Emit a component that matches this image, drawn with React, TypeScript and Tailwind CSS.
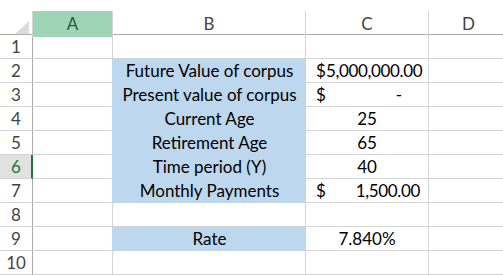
type Row = {
  n: number;
  label?: string;
  value?: React.ReactNode;
};

function Accounting({ num }: { num: string }) {
  return (
    <div className="flex h-full w-full items-end justify-between pl-[10px] pr-[8px] pb-[3px] leading-none">
      <span>$</span>
      <span className={num === '-' ? 'mr-[18px]' : 'tracking-[-0.35px]'}>{num}</span>
    </div>
  );
}

function Centered({ text }: { text: string }) {
  return <div className="flex h-full w-full items-end justify-center pb-[3px] leading-none">{text}</div>;
}

const rows: Row[] = [
  { n: 1 },
  { n: 2, label: 'Future Value of corpus', value: <Accounting num="5,000,000.00" /> },
  { n: 3, label: 'Present value of corpus', value: <Accounting num="-" /> },
  { n: 4, label: 'Current Age', value: <Centered text="25" /> },
  { n: 5, label: 'Retirement Age', value: <Centered text="65" /> },
  { n: 6, label: 'Time period (Y)', value: <Centered text="40" /> },
  { n: 7, label: 'Monthly Payments', value: <Accounting num="1,500.00" /> },
  { n: 8 },
  { n: 9, label: 'Rate', value: <Centered text="7.840%" /> },
  { n: 10 },
];

const cols = 'grid grid-cols-[33px_80px_193px_123px_80px]';

export default function App() {
  return (
    <div
      className="h-[275px] w-[503px] overflow-hidden bg-white pt-[11px] text-[17px] text-black"
      style={{ fontFamily: 'Lato, "Open Sans", sans-serif' }}
    >
      {/* column headers */}
      <div className={`${cols} h-[24px] border-b border-[#ababab] text-[#444]`}>
        <div className="relative border-r border-[#d4d4d4]">
          <div className="absolute right-[3px] bottom-[3px] h-0 w-0 border-b-[13px] border-l-[14px] border-b-[#dcdcdc] border-l-transparent" />
        </div>
        <div className="flex items-center justify-center border-r border-[#d4d4d4] bg-[#9fd5b7] text-[#1f5c3b]">A</div>
        <div className="flex items-center justify-center border-r border-[#d4d4d4]">B</div>
        <div className="flex items-center justify-center border-r border-[#d4d4d4]">C</div>
        <div className="flex items-center justify-center border-r border-[#d4d4d4]">D</div>
      </div>

      {rows.map((r) => {
        const filled = !!r.label;
        const selected = r.n === 6;
        return (
          <div key={r.n} className={`${cols} h-[24px]`}>
            <div
              className={
                selected
                  ? 'flex items-end justify-center border-r-2 border-b border-r-[#217346] border-b-[#d4d4d4] bg-[#e1e1e1] pb-[3px] pl-[1px] leading-none text-[#217346]'
                  : 'flex items-end justify-center border-r border-b border-r-[#ababab] border-b-[#d4d4d4] pb-[3px] leading-none text-[#444]'
              }
            >
              {r.n}
            </div>
            <div className={`border-b border-r border-b-[#d4d4d4] ${filled ? 'border-r-[#bdd7ee]' : 'border-r-[#d4d4d4]'}`} />
            <div className={filled ? 'border-b border-[#bdd7ee] bg-[#bdd7ee]' : 'border-r border-b border-[#d4d4d4]'}>
              {r.label && <Centered text={r.label} />}
            </div>
            <div className="border-r border-b border-[#d4d4d4]">{r.value}</div>
            <div className="border-r border-b border-[#d4d4d4]" />
          </div>
        );
      })}
    </div>
  );
}
